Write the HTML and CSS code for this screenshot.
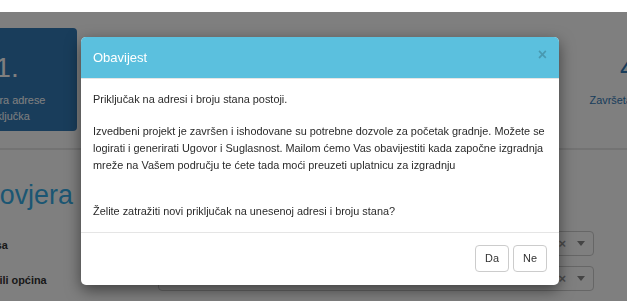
FILE: index.html
```html
<!DOCTYPE html>
<html lang="hr">

<head>
    <meta charset="UTF-8">
    <meta name="viewport" content="width=device-width, initial-scale=1.0">
    <title>Priključak</title>
    <link rel="stylesheet" href="styles.css">
</head>

<body>
    <div class="topbar"></div>

    <div class="page">
        <div class="steps">
            <div class="step active">
                <div class="step-num">1.</div>
                <div class="step-label">Provjera adrese<br>priključka</div>
            </div>
            <div class="step">
                <div class="step-num">2.</div>
                <div class="step-label">Unos podataka</div>
            </div>
            <div class="step">
                <div class="step-num">3.</div>
                <div class="step-label">Uplata</div>
            </div>
            <div class="step">
                <div class="step-num">4.</div>
                <div class="step-label">Završetak radova</div>
            </div>
        </div>

        <div class="section">
            <h2 class="section-title">Provjera</h2>
            <form class="form">
                <div class="form-row">
                    <label class="form-label">Adresa</label>
                    <div class="select">
                        <span class="select-clear">&times;</span>
                        <span class="select-caret"></span>
                    </div>
                </div>
                <div class="form-row">
                    <label class="form-label">Grad ili općina</label>
                    <div class="select">
                        <span class="select-clear">&times;</span>
                        <span class="select-caret"></span>
                    </div>
                </div>
            </form>
        </div>
    </div>

    <div class="backdrop"></div>

    <div class="modal">
        <div class="modal-header">
            <h4 class="modal-title">Obavijest</h4>
            <button class="close" type="button">&times;</button>
        </div>
        <div class="modal-body">
            <p class="first">Priključak na adresi i broju stana postoji.</p>
            <p class="second">Izvedbeni projekt je završen i ishodovane su potrebne dozvole za početak gradnje. Možete se<br>
                logirati i generirati Ugovor i Suglasnost. Mailom ćemo Vas obavijestiti kada započne izgradnja<br>
                mreže na Vašem području te ćete tada moći preuzeti uplatnicu za izgradnju</p>
            <p class="question">Želite zatražiti novi priključak na unesenoj adresi i broju stana?</p>
        </div>
        <div class="modal-footer">
            <button class="btn" type="button">Da</button>
            <button class="btn" type="button">Ne</button>
        </div>
    </div>
</body>

</html>
```

FILE: styles.css
```css
body {
    font-family: "Liberation Sans", Arial, sans-serif;
    font-size: 10.9px;
    color: #2a2a2a;
    margin: 0;
    padding: 0;
    background-color: #ffffff;
    overflow: hidden;
}

.topbar {
    height: 12px;
    background-color: #ffffff;
}

/* steps */
.steps {
    display: grid;
    grid-template-columns: repeat(4, 140px);
    column-gap: 68.2px;
    margin: 16px 0 0 -63px;
}

.step {
    height: 103px;
    box-sizing: border-box;
    padding-top: 26px;
    text-align: center;
    color: #337ab7;
    border-radius: 4px;
}

.step.active {
    background-color: #337ab7;
    color: #ffffff;
}

.step-num {
    font-size: 28px;
    line-height: 28px;
}

.step-label {
    margin-top: 10px;
    line-height: 16px;
}

/* form section */
.section {
    margin-top: 17px;
    border-top: 2px solid #e6e6e6;
}

.section-title {
    font-size: 26.8px;
    font-weight: normal;
    line-height: 1.1;
    color: #37ade6;
    margin: 31px 0 0 -27px;
}

.form {
    margin: 21px 0 0 -29px;
    display: flex;
    flex-direction: column;
    gap: 10px;
}

.form-row {
    display: flex;
}

.form-label {
    width: 187px;
    font-weight: bold;
    line-height: 17px;
    padding-top: 6px;
    color: #333;
}

.select {
    width: 436px;
    height: 25px;
    box-sizing: border-box;
    border: 1px solid #cccccc;
    border-radius: 4px;
    display: flex;
    align-items: center;
    justify-content: flex-end;
    gap: 11px;
    padding-right: 8px;
}

.select-clear {
    color: #999;
    font-size: 13px;
    font-weight: bold;
    line-height: 1;
}

.select-caret {
    width: 0;
    height: 0;
    border-left: 4px solid transparent;
    border-right: 4px solid transparent;
    border-top: 5px solid #888;
}

/* modal */
.backdrop {
    position: fixed;
    top: 12px;
    left: 0;
    right: 0;
    bottom: 0;
    background-color: rgba(0, 0, 0, 0.5);
}

.modal {
    position: absolute;
    top: 37px;
    left: 81px;
    width: 478px;
    background-color: #ffffff;
    border-radius: 5px;
    box-shadow: 0 5px 15px rgba(0, 0, 0, 0.5);
    overflow: hidden;
}

.modal-header {
    height: 42px;
    box-sizing: border-box;
    background-color: #5bc0de;
    border-bottom: 1px solid #e5e5e5;
    display: flex;
    align-items: center;
    padding: 0 12px;
}

.modal-title {
    margin: 0;
    font-size: 13px;
    font-weight: normal;
    color: #ffffff;
}

.close {
    margin: -6px 0 0 auto;
    padding: 0;
    border: 0;
    background: none;
    font-family: "Liberation Sans", Arial, sans-serif;
    font-size: 16px;
    font-weight: bold;
    line-height: 1;
    color: #000;
    opacity: 0.2;
}

.modal-body {
    padding: 12px 12px 12px;
    line-height: 17px;
}

.modal-body p {
    margin: 0;
}

.modal-body .first {
    margin-bottom: 15px;
}

.modal-body .second {
    white-space: nowrap;
}

.modal-body .question {
    margin-top: 28.5px;
}

.modal-footer {
    border-top: 1px solid #e5e5e5;
    padding: 12px 12px 13px;
    display: flex;
    justify-content: flex-end;
    gap: 4px;
}

.btn {
    width: 34px;
    height: 27px;
    padding: 0;
    font-family: "Liberation Sans", Arial, sans-serif;
    font-size: 10.9px;
    color: #333;
    background-color: #ffffff;
    border: 1px solid #cccccc;
    border-radius: 4px;
}
```
